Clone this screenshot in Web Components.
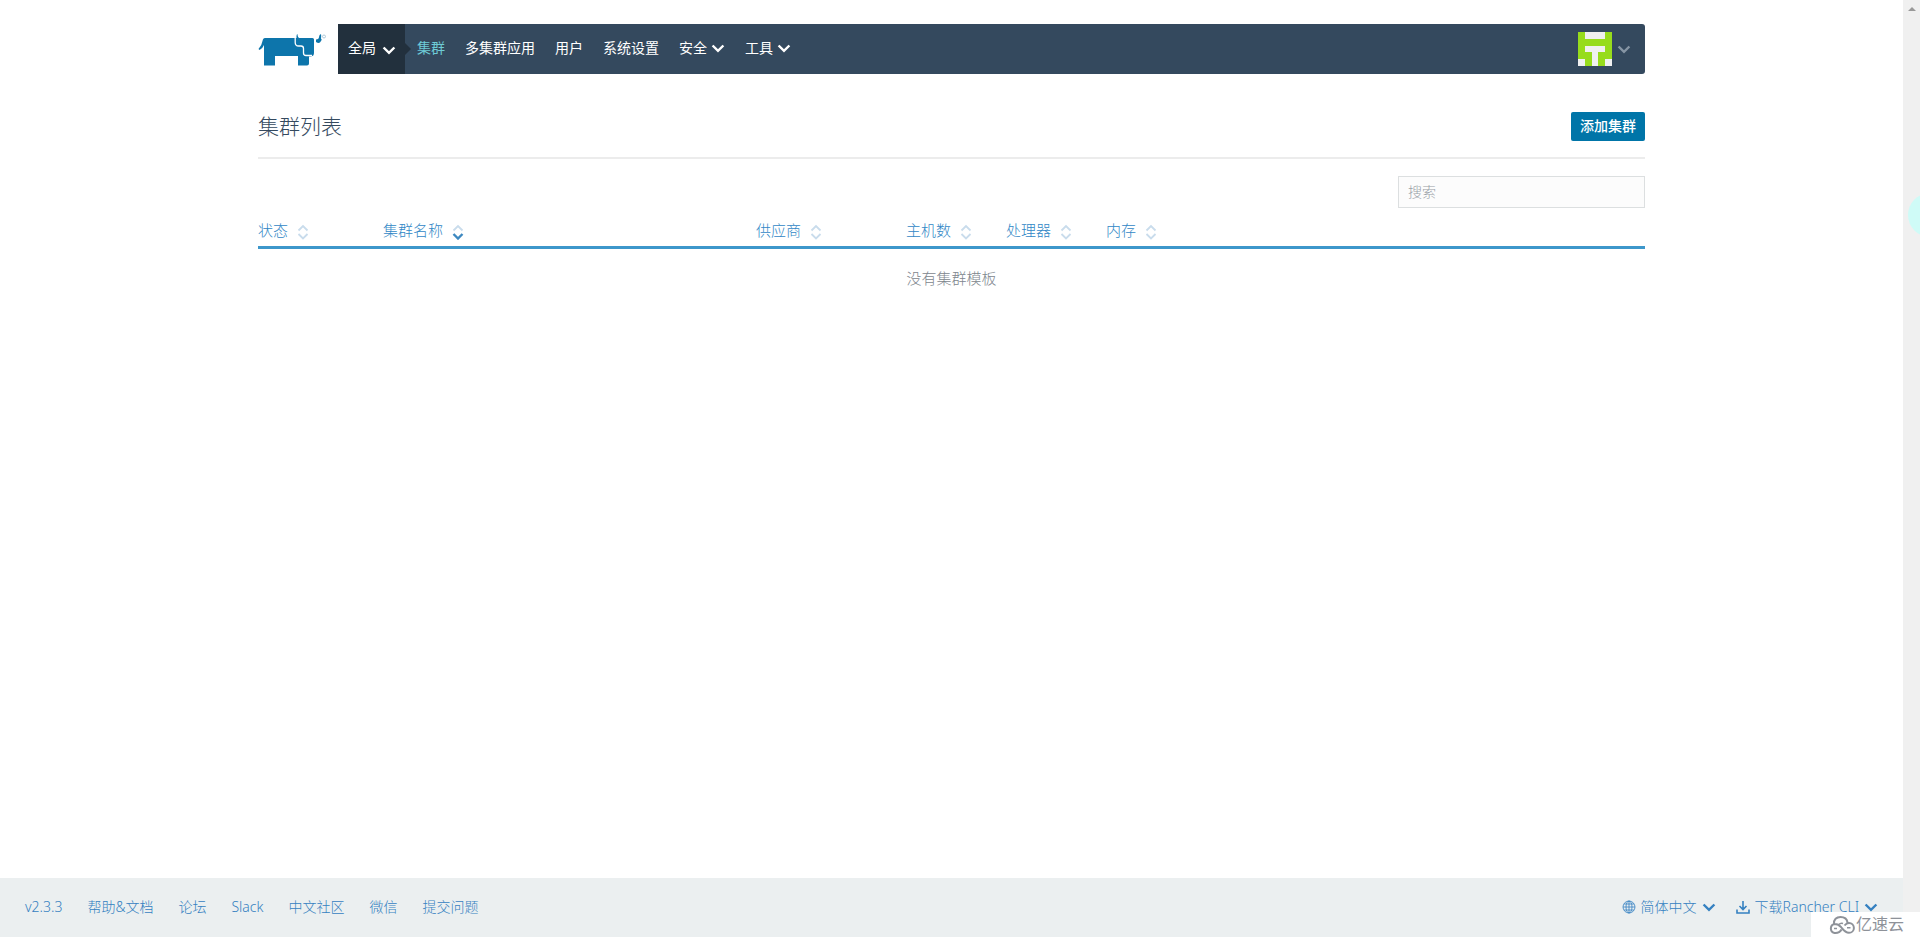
<!DOCTYPE html>
<html lang="zh-CN">
<head>
<meta charset="utf-8">
<title>集群列表</title>
<style>
  body { margin: 0; font-family: "Noto Sans", "Noto Sans CJK SC", sans-serif; font-size: 14px; line-height: 20px; font-weight: 300; color: #34495e; background: #fff; }
</style>
</head>
<body>
<rc-app></rc-app>
<script>
const define = (name, html) => {
  const template = document.createElement('template');
  template.innerHTML = html;
  customElements.define(name, class extends HTMLElement {
    constructor() {
      super();
      this.attachShadow({ mode: 'open' }).append(template.content.cloneNode(true));
    }
  });
};

define('rc-chevron', `
<style>
  :host { display: inline-flex; width: 14px; height: 14px; }
  svg { width: 14px; height: 14px; }
</style>
<svg viewBox="0 0 14 14" fill="none" stroke="currentColor" stroke-width="2.4" aria-hidden="true"><path d="M1.600 4.500 7 9.900l5.400-5.400"/></svg>`);

define('rc-sort', `
<style>
  :host { display: inline-flex; color: #c9dcec; }
  svg { width: 12px; height: 16px; }
  .down { stroke: var(--sort-down, currentColor); stroke-width: var(--sort-weight, 1.8); }
</style>
<svg viewBox="0 0 12 16" fill="none" stroke="currentColor" stroke-width="1.8" aria-hidden="true"><path d="M1.500 6.500 6 2l4.500 4.500"/><path class="down" d="M1.500 10 6 14.500l4.500-4.500"/></svg>`);

define('rc-logo', `
<style>
  :host { display: block; width: 70px; height: 34px; }
  svg { display: block; width: 70px; height: 34px; }
  a { display: block; }
</style>
<a href="#" aria-label="Rancher">
<svg viewBox="0 0 70 34" fill="#0d75ab">
  <path d="M7 6H54.500q1.500 0 1.500 1.500V21q0 3-3 3.500h-2v7q0 2-2 2H40V24H17v9.500H6V13Q5 16 1.500 18L.500 17Q4 13 4.500 9 5 6 7 6z"/>
  <path d="M38.500 7V4q0-1.500 1-2 0 4 3 4.500z"/>
  <path fill="none" stroke="#fff" stroke-width="1.300" d="M37.200 3v7.500q0 3.500 3.500 3.500H43q2.500 0 2.500 2.500V21q0 2.500 2.500 2.500h6"/>
  <path d="M58 10V7.500q3-.5 3-2.500.2-2.500 2-3 .5 2.500 0 4.500 1.500 1 0 2.500-1.500 3.500-5 1z"/>
  <circle cx="66" cy="4.500" r="1.500" fill="none" stroke="#7fa9c2" stroke-width=".6"/>
</svg></a>`);

define('rc-avatar', `
<style>
  :host { display: block; width: 34px; height: 34px; }
  svg { display: block; }
</style>
<svg width="34" height="34" viewBox="0 0 5 5" shape-rendering="crispEdges" aria-hidden="true">
  <path fill="#97dc1c" d="M0 0h5v5H0z"/>
  <path fill="#f0f0f0" d="M1 0h3v1H1zM1 2h3v1H1zM2 3h1v2H2zM0 4h1v1H0zM4 4h1v1H4z"/>
</svg>`);

define('rc-nav', `
<style>
  :host { display: flex; align-items: center; }
  rc-logo { flex: none; margin-right: 10px; }
  nav { flex: 1; display: flex; height: 50px; background: #34495e; border-radius: 0 3px 3px 0; }
  button { border: 0; margin: 0; padding: 0; background: none; font: inherit; font-weight: 400; color: #fff; display: flex; align-items: center; gap: 4px; }
  .scope { position: relative; width: 67px; padding: 0 0 2px 10px; gap: 6px; background: #22303d; }
  .scope::after { content: ""; position: absolute; left: 100%; top: 50%; margin-top: -6px; border: 6px solid transparent; border-left: 6px solid #22303d; border-right: 0; }
  ul { flex: 1; display: flex; align-items: center; gap: 20px; list-style: none; margin: 0; padding: 0 0 2px 12px; }
  a { color: #fff; text-decoration: none; font-weight: 400; }
  a.active { color: #6ecbd6; }
  .user { padding-right: 14px; gap: 5px; color: #8695a4; }
  .scope rc-chevron { margin-top: 4px; }
</style>
<rc-logo></rc-logo>
<nav>
  <button class="scope">全局<rc-chevron></rc-chevron></button>
  <ul>
    <li><a class="active" href="#">集群</a></li>
    <li><a href="#">多集群应用</a></li>
    <li><a href="#">用户</a></li>
    <li><a href="#">系统设置</a></li>
    <li><button>安全<rc-chevron></rc-chevron></button></li>
    <li><button>工具<rc-chevron></rc-chevron></button></li>
  </ul>
  <button class="user" aria-label="用户"><rc-avatar></rc-avatar><rc-chevron></rc-chevron></button>
</nav>`);

define('rc-page-header', `
<style>
  :host { display: flex; align-items: center; justify-content: space-between; padding: 38px 0 16px; border-bottom: 2px solid #ececec; }
  h1 { margin: 0; padding-bottom: 2px; font-size: 21px; line-height: 26px; font-weight: 300; }
  button { height: 29px; padding: 0 9px 2px; border: 0; border-radius: 2px; background: #0075a8; color: #fff; font: inherit; font-weight: 500; }
</style>
<h1><slot></slot></h1>
<button>添加集群</button>`);

define('rc-cluster-table', `
<style>
  :host { display: block; font-size: 15px; }
  .search { display: flex; justify-content: flex-end; padding: 17px 0 10px; }
  input { box-sizing: border-box; width: 247px; height: 32px; padding: 0 9px 2px; border: 1px solid #dcdfe0; background: #fcfcfc; font: inherit; font-size: 14px; color: #34495e; }
  input::placeholder { color: #98a0a6; opacity: 1; }
  table { width: 100%; border-collapse: collapse; table-layout: fixed; }
  th { height: 24px; padding: 0 0 4px; vertical-align: middle; text-align: left; font-weight: 300; border-bottom: 3px solid #3d97cb; }
  th button { display: flex; align-items: center; gap: 9px; padding: 0; border: 0; background: none; font: inherit; line-height: 20px; color: #3187c6; }
  .sorted { --sort-down: #3d88c0; --sort-weight: 2.4; }
  td { height: 57px; padding: 0 0 4px; text-align: center; color: #7d868d; }
  rc-sort { margin-top: 4px; }
  .state { width: 125px; } .name { width: 373px; } .provider { width: 150px; } .count { width: 100px; }
</style>
<div class="search"><input type="search" placeholder="搜索" aria-label="搜索"></div>
<table>
  <colgroup><col class="state"><col class="name"><col class="provider"><col class="count"><col class="count"><col></colgroup>
  <thead><tr>
    <th><button>状态<rc-sort></rc-sort></button></th>
    <th><button class="sorted">集群名称<rc-sort></rc-sort></button></th>
    <th><button>供应商<rc-sort></rc-sort></button></th>
    <th><button>主机数<rc-sort></rc-sort></button></th>
    <th><button>处理器<rc-sort></rc-sort></button></th>
    <th><button>内存<rc-sort></rc-sort></button></th>
  </tr></thead>
  <tbody><tr><td colspan="6">没有集群模板</td></tr></tbody>
</table>`);

define('rc-footer', `
<style>
  :host { display: flex; box-sizing: border-box; justify-content: space-between; align-items: center; height: 59px; padding: 0 25px 2px; background: #ebeff0; }
  div { display: flex; gap: 25px; }
  .tools { gap: 20px; }
  a, button { color: #3581c1; text-decoration: none; font: inherit; }
  button { display: flex; align-items: center; gap: 5px; border: 0; padding: 0; background: none; }
  svg { width: 14px; height: 14px; fill: none; stroke: currentColor; }
</style>
<div>
  <a href="#">v2.3.3</a><a href="#">帮助&amp;文档</a><a href="#">论坛</a><a href="#">Slack</a><a href="#">中文社区</a><a href="#">微信</a><a href="#">提交问题</a>
</div>
<div class="tools">
  <button><svg viewBox="0 0 14 14" stroke-width=".8"><circle cx="7" cy="7" r="6"/><ellipse cx="7" cy="7" rx="3" ry="6"/><path d="M7 1v12M1 7h12M2 4h10M2 10h10"/></svg>简体中文<rc-chevron></rc-chevron></button>
  <button><svg viewBox="0 0 14 14" stroke-width="1.600"><path d="M7 1v8M3.500 6 7 9.500 10.500 6M1 9.500V13h12V9.500"/></svg>下载Rancher CLI<rc-chevron></rc-chevron></button>
</div>`);

define('rc-scrollbar', `
<style>
  :host { display: block; position: relative; width: 17px; background: #f0f0f0; overflow: hidden; }
  .arrow { margin: 7px 0 0 5px; width: 0; border: 4px solid transparent; border-top: 0; border-bottom-color: #999; }
  .bubble { position: absolute; left: 5px; top: 193px; width: 44px; height: 44px; border-radius: 50%; background: #cffbf7; }
</style>
<div class="arrow"></div><div class="bubble"></div>`);

define('rc-watermark', `
<style>
  :host { display: flex; align-items: center; gap: 1px; box-sizing: border-box; width: 109px; height: 25px; padding-left: 17px; background: #fff; color: #8e9299; font-size: 16px; font-weight: 400; line-height: 25px; }
  svg { flex: none; width: 27px; height: 20px; }
</style>
<svg viewBox="0 0 27 20" fill="none" stroke="currentColor" stroke-width="2" aria-hidden="true"><path d="M6 9C5.500 4.500 8.500 2 12.500 2c3.500 0 6.500 2 7 5.500M16.500 10.500q2-2.500 4.500-2.500a4.800 4.800 0 0 1 0 9.800c-4 0-6-3.300-8-5.800-2-2.300-3.500-3-6-3a4.500 4.500 0 0 0-.500 8.900c3.500.3 6-1.500 7-3.400"/><path stroke-width="1.600" d="M11 9.500q1.500-1.800 4-1M19 12.800h3.500M6 13.500h3"/></svg>
<slot></slot>`);

define('rc-app', `
<style>
  :host { position: relative; display: grid; grid-template-columns: 1fr auto; min-height: 100vh; }
  .page { display: flex; flex-direction: column; }
  main { box-sizing: border-box; flex: 1; width: 100%; max-width: 1387px; margin: 0 auto; padding-top: 24px; }
  rc-watermark { position: absolute; right: 0; bottom: 0; }
</style>
<div class="page">
  <main>
    <rc-nav></rc-nav>
    <rc-page-header>集群列表</rc-page-header>
    <rc-cluster-table></rc-cluster-table>
  </main>
  <rc-footer></rc-footer>
</div>
<rc-scrollbar></rc-scrollbar>
<rc-watermark>亿速云</rc-watermark>`);
</script>
</body>
</html>
